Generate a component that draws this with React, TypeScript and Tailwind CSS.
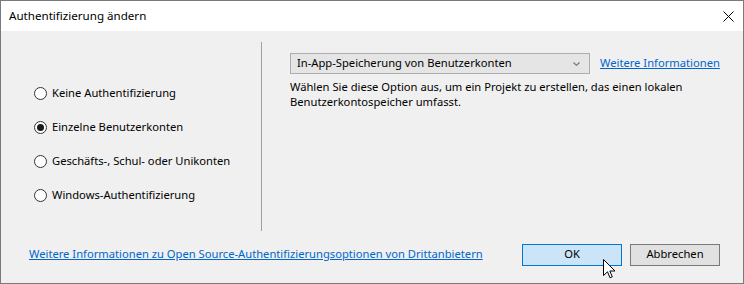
import React, { useState } from "react";

const options = [
  "Keine Authentifizierung",
  "Einzelne Benutzerkonten",
  "Geschäfts-, Schul- oder Unikonten",
  "Windows-Authentifizierung",
];

function Radio({ label, checked, onSelect }: { label: string; checked: boolean; onSelect: () => void }) {
  return (
    <button type="button" onClick={onSelect} className="flex items-center h-[16px] text-left">
      <span className="w-[13px] h-[13px] rounded-full border border-[#333333] bg-white flex items-center justify-center">
        {checked && <span className="w-[7px] h-[7px] rounded-full bg-[#1a1a1a]" />}
      </span>
      <span className="ml-[5px]">{label}</span>
    </button>
  );
}

export default function App() {
  const [selected, setSelected] = useState(1);

  return (
    <div
      className="relative w-[744px] h-[284px] border border-[#7a7a7a] bg-[#f0f0f0] flex flex-col text-[11.2px] text-black overflow-hidden"
      style={{ fontFamily: '"Noto Sans", "Liberation Sans", sans-serif' }}
    >
      {/* Titelleiste */}
      <div className="h-[30px] bg-white flex items-center justify-between pl-[8px] pr-[9px]">
        <span className="leading-none text-[11.6px]">Authentifizierung ändern</span>
        <svg width="11" height="11" viewBox="0 0 11 11" className="text-black">
          <path d="M0.5 0.5 L10.5 10.5 M10.5 0.5 L0.5 10.5" stroke="currentColor" strokeWidth="1" />
        </svg>
      </div>

      {/* Inhalt */}
      <div className="flex pt-[11px]">
        <div className="w-[260px] flex flex-col gap-[18px] pl-[33px] pt-[43px]">
          {options.map((o, i) => (
            <Radio key={o} label={o} checked={selected === i} onSelect={() => setSelected(i)} />
          ))}
        </div>
        <div className="w-px h-[189px] bg-[#a0a0a0]" />
        <div className="flex-1 pl-[28px] pt-[11px]">
          <div className="flex items-center">
            <div className="w-[300px] h-[21px] border border-[#adadad] bg-[#e5e5e5] flex items-center justify-between pl-[6px] pr-[9px]">
              <span>In-App-Speicherung von Benutzerkonten</span>
              <svg width="7" height="4" viewBox="0 0 7 4">
                <path d="M0.5 0.5 L3.5 3.3 L6.5 0.5" fill="none" stroke="#707070" strokeWidth="1.1" />
              </svg>
            </div>
            <a href="#" className="ml-[10px] text-[#0066cc] underline">
              Weitere Informationen
            </a>
          </div>
          <p className="mt-[5px] leading-[15px] pr-[40px]">
            Wählen Sie diese Option aus, um ein Projekt zu erstellen, das einen lokalen Benutzerkontospeicher umfasst.
          </p>
        </div>
      </div>

      {/* Fußzeile */}
      <div className="flex-1 flex items-center pl-[28px] pr-[23px] pb-[5px]">
        <a href="#" className="text-[#0066cc] underline">
          Weitere Informationen zu Open Source-Authentifizierungsoptionen von Drittanbietern
        </a>
        <div className="ml-auto flex gap-[8px]">
          <button type="button" className="w-[100px] h-[22px] border border-[#0078d7] bg-[#cce4f7]">
            OK
          </button>
          <button type="button" className="w-[90px] h-[22px] border border-[#7a7a7a] bg-[#e1e1e1]">
            Abbrechen
          </button>
        </div>
      </div>

      {/* Mauszeiger */}
      <svg width="13" height="21" viewBox="0 0 13 21" className="absolute left-[602px] top-[258px]">
        <path
          d="M0.5 0.5 L0.5 16.5 L4.5 12.8 L7 18.8 L9.3 17.8 L6.8 12 L12 12 Z"
          fill="white"
          stroke="black"
          strokeWidth="1"
          strokeLinejoin="miter"
        />
      </svg>
    </div>
  );
}
